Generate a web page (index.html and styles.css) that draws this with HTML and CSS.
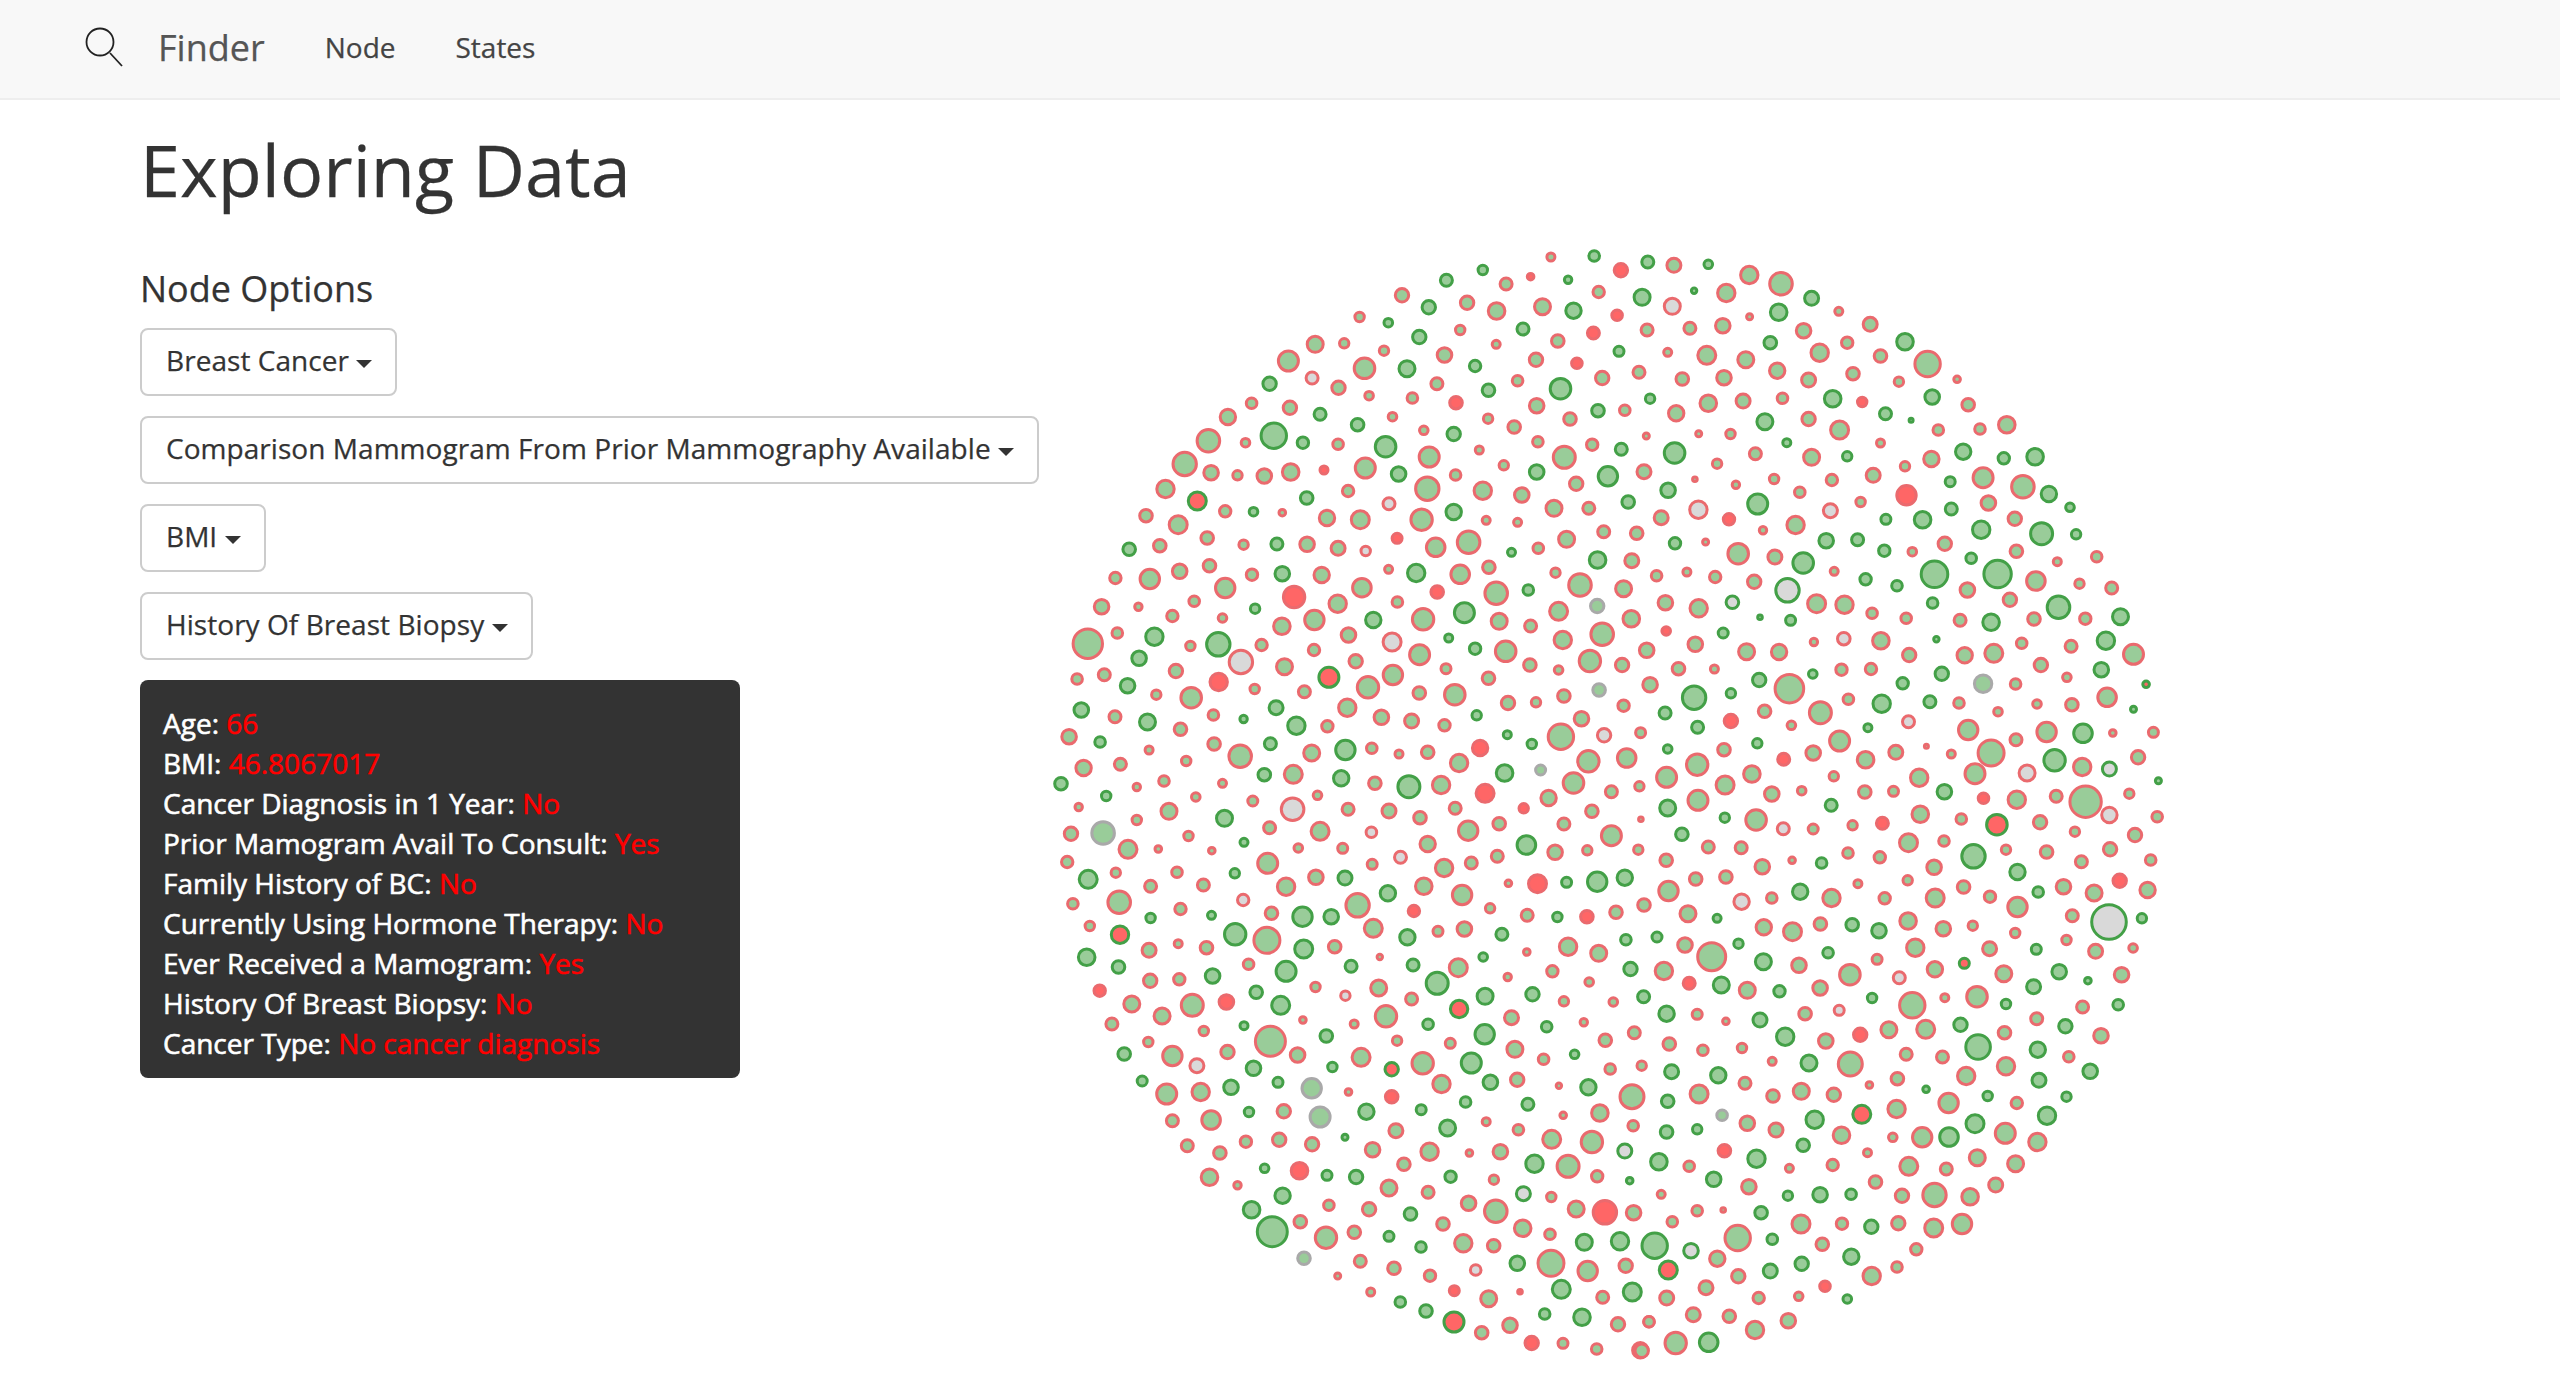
FILE: index.html
```html
<!DOCTYPE html>
<html lang="en">
	<head>
		<meta charset="UTF-8" />
		<meta name="viewport" content="width=device-width, initial-scale=1.0" />
		<title>Finder</title>
		<link rel="stylesheet" href="styles.css">
	</head>
	<body>
		<nav class="navbar">
			<svg class="brand-icon" viewBox="0 0 44 48" width="44" height="48">
				<circle cx="17" cy="17" r="13.5" fill="none" stroke="#222" stroke-width="1.8" />
				<line x1="27" y1="28" x2="39" y2="41" stroke="#222" stroke-width="1.8" />
			</svg>
			<a class="brand">Finder</a>
			<a class="nav-link">Node</a>
			<a class="nav-link">States</a>
		</nav>
		<main class="page">
			<div class="options">
				<h1>Exploring Data</h1>
				<h4>Node Options</h4>
				<button type="button" class="dropdown">Breast Cancer <span class="caret"></span></button>
				<button type="button" class="dropdown">Comparison Mammogram From Prior Mammography Available <span class="caret"></span></button>
				<button type="button" class="dropdown">BMI <span class="caret"></span></button>
				<button type="button" class="dropdown">History Of Breast Biopsy <span class="caret"></span></button>
				<div class="details">
					<div>Age: <span class="val">66</span></div>
					<div>BMI: <span class="val">46.8067017</span></div>
					<div>Cancer Diagnosis in 1 Year: <span class="val">No</span></div>
					<div>Prior Mamogram Avail To Consult: <span class="val">Yes</span></div>
					<div>Family History of BC: <span class="val">No</span></div>
					<div>Currently Using Hormone Therapy: <span class="val">No</span></div>
					<div>Ever Received a Mamogram: <span class="val">Yes</span></div>
					<div>History Of Breast Biopsy: <span class="val">No</span></div>
					<div>Cancer Type: <span class="val">No cancer diagnosis</span></div>
				</div>
			</div>
			<svg id="chart" class="chart" viewBox="1050 230 1140 1150"></svg>
		</main>
		<script src="chart.js"></script>
	</body>
</html>
```

FILE: styles.css
```css
body {
	margin: 0;
	padding: 0;
	background-color: #fff;
	color: #333;
	font-family: "Open Sans", sans-serif;
	font-size: 28px;
	line-height: 40px;
	-webkit-text-stroke: 0.25px;
}
.navbar {
	display: flex;
	align-items: center;
	height: 98px;
	padding-left: 83px;
	background-color: #f8f8f8;
	border-bottom: 2px solid #eee;
}
.brand-icon {
	margin-right: 31px;
}
.brand {
	margin-right: 60px;
	margin-bottom: 2px;
	font-size: 36px;
	color: #555;
}
.nav-link {
	margin-right: 60px;
	margin-bottom: 4px;
	color: #444;
}
.page {
	display: flex;
	padding-left: 140px;
}
.options {
	width: 910px;
	flex-shrink: 0;
}
h1 {
	margin: 30px 0 60px;
	font-size: 72px;
	font-weight: 400;
	line-height: 79px;
}
h4 {
	margin: 0 0 19px;
	font-size: 36px;
	font-weight: 400;
	line-height: 40px;
}
.dropdown {
	display: block;
	height: 68px;
	margin-bottom: 20px;
	padding: 10px 23px 14px 24px;
	font-family: inherit;
	font-size: 28px;
	line-height: 40px;
	letter-spacing: 0.05px;
	color: #333;
	white-space: nowrap;
	background-color: #fff;
	border: 2px solid #ccc;
	border-radius: 8px;
}
.caret {
	display: inline-block;
	vertical-align: middle;
	border-top: 8px solid #333;
	border-left: 8px solid transparent;
	border-right: 8px solid transparent;
}
.details {
	width: 600px;
	box-sizing: border-box;
	padding: 23px 23px 15px;
	color: #fff;
	background-color: #333;
	border-radius: 8px;
	-webkit-text-stroke: 0.6px;
}
.val {
	color: #f00;
}
.chart {
	width: 1140px;
	height: 1150px;
	margin-top: 130px;
	flex-shrink: 0;
}
```

FILE: chart.js
```js
// nodes read off as "x y diameter type" per crop, sx/sy turn them into page coordinates
const RED = "#ea6a6e";
const GREEN = "#43a047";
const GRAY = "#a9a9a9";
const F_GREEN = "#99cc99";
const F_RED = "#ff6666";
const F_GRAY = "#d9d9d9";

const types = {
	a: [F_GREEN, RED],
	b: [F_GREEN, GREEN],
	c: [F_RED, RED],
	d: [F_RED, GREEN],
	e: [F_GRAY, RED],
	f: [F_GRAY, GREEN],
	g: [F_GREEN, GRAY],
};

const crops = [
	{ ox: 1040, oy: 230, sx: 2.613, sy: 3, data: `
1335 81 30a 1448 78 38b 1518 121 46c 1062 151 42b 1157 120 34b 1218 162 42a 1282 140 26c 1380 149 28b 1460 186 40a 946 196 46a
1016 232 46b 1116 218 46a 1193 243 56a 1313 230 54a 1394 242 52b 1508 256 38c 835 261 34a 910 278 32b 1098 300 34a 1262 297 42b
1446 309 42c 991 321 46b 719 343 54a 795 340 34a 1192 343 30a 1353 333 44a 1513 364 36b 899 362 34a 1057 375 50a 649 393 66a
848 415 68a 959 416 54b 1137 408 40b 1296 389 46a 1403 400 38c 1469 444 46a 711 444 42e 600 461 46b 780 473 46a 1037 461 42a
1172 481 44b 1248 452 38a 1360 476 68b 860 497 32a 973 504 38a 553 520 38a 653 533 46a 1087 518 44c 1298 527 50a 732 553 42b
921 560 32a 1171 566 34a 1458 542 44b 1528 541 38a 1385 567 44a 491 561 52a 830 584 44b 611 617 82b 1003 601 32a 1239 591 44a
1081 612 46b 440 632 74a 537 638 32a 687 638 40b 779 643 38a 903 650 68b 1301 635 38a 1443 644 40a 1148 660 30a 1519 658 42b
1017 681 66a 1370 682 72a 378 702 76a 447 728 50a 516 736 34a 586 738 50a 655 726 56a 742 720 30c 850 714 66a 937 732 50b
1086 735 38a 1212 706 34a 1298 726 50b 1484 739 64b 1012 776 76a 1157 782 58a 1401 761 46a 328 777 58a 805 783 40a 697 804 44b
1259 795 50a 411 813 60d 277 857 44a 484 844 40a 558 845 32b 633 848 26a 750 864 52a 837 869 60a 912 821 42e 997 869 70a
1081 846 52b 1343 835 54a 1434 835 42a 1537 816 44b 1166 871 30a 1248 877 30a 361 884 60a 437 924 44a 933 925 36c 1473 905 42a
1376 928 54a 1034 952 62a 1120 937 74a 233 958 44b 313 947 44a 532 944 34a 619 942 42b 698 943 50a 779 955 48a 851 963 34e
1232 967 30b 1302 955 38a 1457 990 56b 197 1044 40a 287 1047 64a 365 1024 50a 443 1007 44a 554 1034 40a 633 1031 50b 736 1035 52a
911 1018 30a 983 1029 58b 1098 1033 62a 1173 1012 44a 1347 1028 34a 1411 1065 74a 1038 1086 44c 1192 1090 74a 1276 1080 38b 1525 1076 54a
161 1130 50a 257 1130 28a 403 1114 38a 484 1074 64a 664 1101 70c 841 1073 62a 778 1121 58a 934 1116 38a 346 1158 40a 562 1136 34b
477 1164 32a 1355 1144 60a 1456 1128 46g 1109 1148 66b 717 1170 64a 871 1170 52b 1001 1168 70a 1200 1174 54a 632 1189 56a 1282 1188 42a
1545 1166 56a 202 1209 38a 125 1241 94a 299 1220 58b 806 1215 50a 1469 1213 74a 1366 1230 58a 920 1236 60e 466 1243 76b 393 1248 34a
579 1245 40a 716 1260 40a 1068 1224 30b 1137 1256 40b 992 1274 66a 259 1285 50b 1217 1264 68a 525 1296 76e 1280 1305 44a 1437 1293 70a
1521 1305 46a 355 1323 46a 639 1310 54a 825 1294 46a 1061 1316 36a 168 1334 42a 97 1347 38a 922 1335 64a 1172 1345 44a 1355 1320 32a
229 1367 50b 755 1342 66d 467 1356 58c 561 1377 34a 857 1372 70a 1461 1380 44g 304 1394 34a 395 1403 68a 691 1385 42a 991 1389 44a
1084 1394 68a 1369 1398 44a 1223 1419 46a 1296 1417 34a 108 1440 50b 196 1460 42a 453 1455 38a 617 1433 48b 803 1433 58a 1525 1427 40a
892 1462 50a 971 1473 48a 1141 1456 34b 1415 1466 50a 532 1467 28b 281 1476 54b` },
	{ ox: 1600, oy: 230, sx: 2.613, sy: 3, data: `
125 96 42b 193 106 48a 283 103 32b 390 135 58a 473 161 74a 553 205 48b 110 202 54b 189 229 54e 246 182 22b 330 189 58a
467 247 56b 624 244 30a 706 283 48a 123 300 42a 235 295 42a 321 287 50a 391 260 24a 532 302 50a 797 335 56b 856 402 82a
445 338 44b 646 338 40a 733 378 44a 574 368 58a 177 367 30a 279 376 60a 381 389 54a 102 427 42a 215 447 44a 324 443 50a
463 422 52a 545 450 48a 661 431 44a 781 455 34a 933 448 26a 131 506 34b 283 520 56a 374 513 48a 477 505 38a 608 506 56b
685 516 34c 868 501 50b 962 524 44a 199 550 52a 431 575 54b 545 567 46a 746 551 42b 813 571 18b 626 600 60a 884 600 38a
993 597 38a 1063 584 56a 121 618 24a 258 611 24a 341 612 34a 488 638 30b 733 639 30a 195 669 68b 406 671 42a 553 682 54a
646 679 34b 866 687 52a 949 665 52b 1055 685 40b 1137 680 56b 306 701 34a 115 725 48a 248 748 20a 355 764 28a 455 747 34a
606 750 40a 714 736 48a 797 709 34a 915 755 36b 1001 743 66a 1105 770 74a 522 787 38a 178 781 50b 412 822 66b 801 796 64c
1173 792 52b 1228 832 32b 1015 819 50a 681 816 34a 257 839 58e 602 842 48e 918 837 42b 1084 866 46a 160 863 48a 337 868 40c
511 885 58a 747 868 36b 843 869 56b 996 899 58b 1154 911 72b 96 910 44a 426 901 28a 591 932 50b 673 929 42b 1244 913 34b
196 940 40b 276 936 24a 743 962 40b 901 941 46a 361 971 68a 816 965 32a 1088 964 44a 457 981 48a 83 992 48a 531 999 68b
970 985 38b 1298 980 38a 1195 995 30a 874 1033 86b 1039 1032 88b 148 1037 38a 227 1026 30a 301 1041 40a 612 1024 30a 1139 1053 62a
1253 1061 34a 403 1055 46a 694 1048 40b 776 1067 38b 960 1080 50a 1337 1074 42a 490 1081 76f 1071 1109 46a 566 1121 60a 639 1124 58a
171 1118 50a 258 1135 58a 346 1117 44f 869 1119 38b 1198 1132 74b 711 1150 38a 418 1162 20b 498 1171 36b 800 1165 38a 941 1171 42a
1134 1167 44a 1022 1177 56b 1268 1166 40a 1360 1160 54b 173 1203 32c 322 1209 36b 637 1226 44e 734 1232 56a 559 1236 28a 879 1228 22b
249 1243 50a 122 1261 50a 1102 1240 38a 1322 1232 58b 383 1265 54a 468 1266 52a 953 1276 52a 1029 1270 60a 808 1275 46a 1231 1249 42a
1394 1273 66a 205 1316 44a 299 1317 30a 631 1319 40a 708 1317 40a 1152 1305 46a 1310 1319 50b 1220 1342 32a 131 1364 50a 556 1332 32b
416 1350 46b 893 1331 46b 791 1360 40b 1001 1361 58g 1086 1362 38a 1427 1363 26d 495 1376 92a 246 1403 76b 342 1390 34b 649 1408 38a
736 1421 58b 862 1415 42b 1325 1402 62a 1142 1422 32a 1233 1424 44a 170 1449 42b 938 1419 38a 1040 1445 32a 430 1444 44a 576 1448 72a
1394 1438 24b 342 1473 46c 806 1475 42e` },
	{ ox: 1040, oy: 720, sx: 2.613, sy: 3, data: `
76 50 50a 157 66 38b 367 28 44a 670 17 58b 751 19 40a 1057 16 40a 1221 44 30b 1361 50 82a 1474 46 46e 285 90 30a
455 72 44a 602 71 42b 523 109 74a 710 99 54a 798 90 64b 867 85 38a 938 102 30a 1013 97 44a 1150 84 52c 1285 72 34b
114 144 52a 210 133 42a 382 123 34a 1095 129 58a 1433 124 70a 1533 114 62a 1308 150 36g 55 191 44b 586 164 44b 662 163 60a
787 175 52b 1214 159 56b 324 183 38a 477 190 30a 875 190 44a 964 200 72b 1048 195 58a 1394 189 68a 1163 220 60c 253 201 28a
1493 215 42a 173 228 34b 407 231 32a 725 226 32a 556 243 36a 1329 234 52a 101 261 28a 660 268 74e 805 268 42a 337 274 54a
912 273 48a 1085 265 42a 1264 265 34c 1442 274 44a 482 295 54b 253 300 34a 600 323 42a 993 293 44a 1200 311 44a 1369 312 42a
732 334 60a 1119 332 64a 866 337 38e 165 339 74g 81 341 46a 1493 347 66a 388 348 34a 230 388 60a 533 367 30b 1013 372 52a
1271 375 62b 1346 397 50a 1430 391 34a 309 387 26a 449 392 26a 675 384 32a 791 385 36a 942 412 42e 1195 409 42a 71 426 40a
1127 429 42a 1056 444 58a 868 433 36a 595 430 66a 198 458 34a 358 457 38a 509 460 34b 126 478 60b 289 499 42a 427 495 42a
721 472 50a 797 474 48b 643 500 58a 1003 499 56a 1528 473 52b 1224 490 26a 1300 491 60c 1376 487 36b 1456 485 64b 909 520 52b
1103 525 64a 531 540 40e 207 547 74a 86 551 38a 367 567 40a 830 556 76a 1176 565 34a 448 586 30b 605 580 44a 289 594 34b
686 590 64b 761 590 50b 977 573 40c 1273 586 42a 1352 591 34b 1429 590 44c 1505 577 44a 130 618 34a 209 644 58d 510 643 70b
593 661 84a 871 625 60a 1040 634 36a 1109 627 50a 960 652 52b 1207 643 42b 1531 659 38b 361 671 30a 285 691 48a 435 683 44a
689 687 60b 770 680 44a 1380 680 58a 1460 700 54a 1272 696 26a 122 712 56b 888 711 22a 205 741 44b 545 733 38a 643 754 66b
813 739 42b 975 735 42b 1158 711 32b 1093 743 60a 1543 747 46b 1339 754 40a 288 782 46a 364 778 40a 451 768 50b 1222 771 28a
1435 786 32a 720 801 34a 885 804 54a 1038 790 72b 156 812 40c 565 817 44b 1163 829 54b 798 827 34e 971 837 42a 1287 823 46b
240 852 54a 398 856 72a 487 846 50c 629 856 60b 1369 844 34a 1498 846 32a 904 889 70a 1095 867 58d 319 888 54a 1232 893 48a
687 900 26a 188 912 42a 533 917 30b 821 912 30a 1014 913 38b 1324 920 38b 1421 907 28a 428 933 34a 602 964 96a 748 948 44b
1162 943 64b 933 962 34a 1072 970 36a 1477 961 44a 1553 938 42a 283 966 34a 220 1002 44b 346 1008 64a 490 996 46a 673 1005 50a
839 1012 60a 1241 988 54a 1316 1018 38a 1397 1003 32b 410 1037 48e 558 1045 50b 764 1041 34b 919 1048 46d 1000 1030 70a 1127 1029 66b
1490 1047 38a 267 1083 36b 622 1087 36b 710 1105 64g 1049 1092 58a 1177 1087 50b 1247 1079 46a 1356 1097 22a 1433 1102 52b 1547 1130 78a
331 1122 66a 420 1116 58a 499 1102 50b 806 1116 26a 919 1130 44c 1112 1146 38b 1275 1153 42b 1463 1179 56a 546 1176 34b 637 1174 46a
853 1175 52b 996 1169 36b 1367 1186 26a 732 1191 66g 346 1202 42a 447 1200 62a 1166 1205 30a 1550 1217 38a 1250 1229 38a 930 1232 48a
1065 1224 54b 1337 1258 60a 1442 1266 70a 797 1252 24b 385 1277 42a 538 1265 40a 625 1259 46a 711 1273 46a 1528 1293 48f 470 1299 44a
869 1289 50a 1018 1295 58a 1203 1295 50a 1122 1299 26a 951 1333 44a 1292 1331 58b 1380 1339 72a 587 1345 32b 678 1352 56c 750 1366 36b
826 1371 46b 443 1372 56a 1073 1370 40b 1186 1379 34a 1456 1369 40a 1541 1382 26b 516 1396 28a 912 1404 54a 1014 1417 42a 634 1427 52b
1263 1421 48f 1336 1431 34a 755 1456 38a 860 1468 46a 1120 1450 50a 553 1469 56b 1401 1467 54a 1191 1474 74a 968 1482 44b 1476 1477 76c
1551 1478 50a` },
	{ ox: 1600, oy: 720, sx: 2.613, sy: 3, data: `
106 38 36a 255 22 42b 500 16 32a 700 23 30b 962 30 64a 1087 59 42a 1167 36 64a 1262 40 62b 1340 39 26a 1446 37 36a
177 87 32b 411 70 34b 853 79 18a 103 199 34a 324 89 44a 480 118 42c 557 99 50a 626 63 66a 694 119 56a 773 97 48a
918 102 30a 1022 99 84a 254 134 70a 397 162 56a 174 172 66a 611 169 34a 834 173 58a 980 161 66a 1116 159 54e 1188 121 70b
1260 141 58a 1331 147 48f 1406 112 46a 1459 182 24b 327 195 60a 449 222 50a 527 212 32a 692 216 44a 767 214 36a 900 215 50b
1002 235 38c 1089 239 58a 1192 229 42a 1269 245 100a 1383 221 34a 256 241 66a 107 298 20a 177 264 54b 604 256 42b 326 293 34b
408 300 68a 479 326 42e 557 327 36a 660 316 34a 738 310 42c 837 283 56a 944 297 38a 1037 314 68d 1150 307 46a 1331 285 52e
1456 290 38a 1241 335 34a 214 343 44b 1398 345 46a 283 381 42a 369 383 42a 806 368 60a 899 363 38a 100 389 34a 976 409 76b
1061 389 34a 1167 396 44a 1333 388 46a 173 421 44a 424 440 50a 502 421 26a 579 429 38b 648 399 38a 731 412 40a 873 442 50a
1258 425 42a 1439 420 38a 1091 456 52b 1358 482 46c 674 491 30a 804 481 34a 950 501 44a 1145 516 38b 1211 500 50a 250 477 44a
329 471 44a 179 513 64a 523 515 52b 1291 519 54a 1431 510 52a 115 555 44a 449 534 38a 605 534 58a 744 535 40a 876 534 60a
1019 530 40a 370 545 52e 1091 561 64a 230 581 54a 1234 587 42a 1330 606 110f 1416 595 34b 306 595 30b 428 622 52a 503 635 60a
576 612 44a 659 614 44b 729 632 50b 805 603 56a 897 626 50a 974 617 34a 1085 639 34a 149 651 36b 222 675 50a 1219 660 34a
292 710 90a 362 671 34b 824 683 58a 1018 686 48a 1140 688 36b 596 698 38b 1393 684 32a 1295 694 48a 427 725 54b 520 736 50a
724 718 36a 952 730 36d 875 748 52a 653 764 68a 1055 761 54a 1200 755 50b 167 753 58a 782 773 42e 1275 782 26b 1363 764 50a
233 790 42c 317 795 54b 385 811 54a 469 814 40b 575 804 50a 1133 800 48b 114 830 42b 711 834 34b 901 833 30a 985 830 68a
816 856 82a 1061 852 34b 1261 861 42a 1354 854 38b 174 881 52b 254 883 36a 329 904 26a 418 900 48b 536 881 44a 625 871 36e
1141 896 42a 1216 919 46b 942 914 46b 484 950 58b 755 929 54a 851 928 60a 680 944 46c 1309 947 50a 1057 938 44a 590 963 50a
181 972 44a 988 981 80b 269 991 38a 371 984 34a 1144 989 52b 1225 1010 38a 800 1003 42a 895 1011 42a 450 1024 30a 546 1029 54b
654 1032 78a 1061 1039 58a 1281 1054 50b 109 1037 34a 187 1055 48b 309 1066 52b 957 1068 58a 379 1090 42a 777 1076 44a 1147 1081 48b
704 1095 26a 526 1114 54a 852 1108 26b 1013 1128 34b 611 1124 46a 1219 1130 34b 452 1128 44a 1089 1149 40a 177 1144 44b 259 1122 60a
911 1149 64a 775 1167 58a 684 1183 60d 1168 1187 58b 319 1186 38g 561 1199 58b 980 1211 60b 385 1210 50a 460 1230 48a 174 1236 44b
254 1228 34b 631 1246 56a 842 1252 64a 912 1251 62b 1059 1240 66a 765 1252 32a 1143 1266 58a 531 1276 44b 699 1298 30a 325 1292 44c
986 1313 54a 409 1316 58b 154 1325 56b 233 1339 38a 608 1335 40a 807 1339 60a 1086 1331 54a 905 1347 42a 495 1345 30a 297 1378 50b
720 1386 44a 1034 1395 48a 389 1400 50a 160 1423 30a 575 1424 50b 656 1423 38b 491 1427 34b 874 1425 76a 789 1427 46a 967 1430 56a
254 1472 38a 322 1470 20a 421 1478 44b` },
	{ ox: 1180, oy: 1200, sx: 3, sy: 3, data: `
277 95 96b 361 65 44a 438 113 70a 523 97 44a 627 109 36b 723 141 38b 789 72 44a 850 130 58a 941 137 44a 1028 85 56a
1110 103 38a 1213 127 54b 1320 124 58b 1424 137 82b 372 175 44g 541 184 42a 642 205 44a 750 227 40a 887 210 38e 1012 190 50b
1113 190 84a 1223 213 64a 1337 197 46a 473 228 24a 823 272 36c 926 296 54a 1020 275 20c 1144 268 60b 1268 292 42a 1357 276 60b
572 276 30a 661 306 38b 738 333 44b 822 366 66d 905 398 44a 990 376 50a 1094 342 38b 1206 352 56b 1314 373 46a 1407 365 38a
1055 429 46c 1149 430 36a 1250 447 38a 1381 451 52a` },
	{ ox: 1640, oy: 1200, sx: 3, sy: 3, data: `
97 65 38a 483 72 60a 606 71 40a 694 80 46b 775 70 46a 881 84 60a 966 72 64a 293 114 82a 397 118 38b 153 152 50f
232 176 52a 547 133 44a 634 170 52b 829 148 40a 85 210 60d 391 213 48b 485 191 46b 295 229 46a 695 228 58a 771 201 38a
198 263 48a 555 259 38c 80 294 48a 356 294 40a 476 289 32a 622 297 32b 160 344 48a 268 349 44a 345 390 58a 445 362 50a
27 365 38a 107 429 70a 206 427 62b 5 452 46a` },
];

const svg = document.getElementById("chart");

crops.forEach(function (crop) {
	const toks = crop.data.trim().split(/\s+/);
	for (let i = 0; i < toks.length; i += 3) {
		const x = crop.ox + toks[i] / crop.sx;
		const y = crop.oy + toks[i + 1] / crop.sy;
		const d = parseInt(toks[i + 2]);
		const t = types[toks[i + 2].slice(-1)];
		const node = document.createElementNS("http://www.w3.org/2000/svg", "circle");
		node.setAttribute("cx", x.toFixed(1));
		node.setAttribute("cy", y.toFixed(1));
		node.setAttribute("r", (d / 6 - 1).toFixed(1));
		node.setAttribute("fill", t[0]);
		node.setAttribute("stroke", t[1]);
		node.setAttribute("stroke-width", "3");
		svg.appendChild(node);
	}
});
```
